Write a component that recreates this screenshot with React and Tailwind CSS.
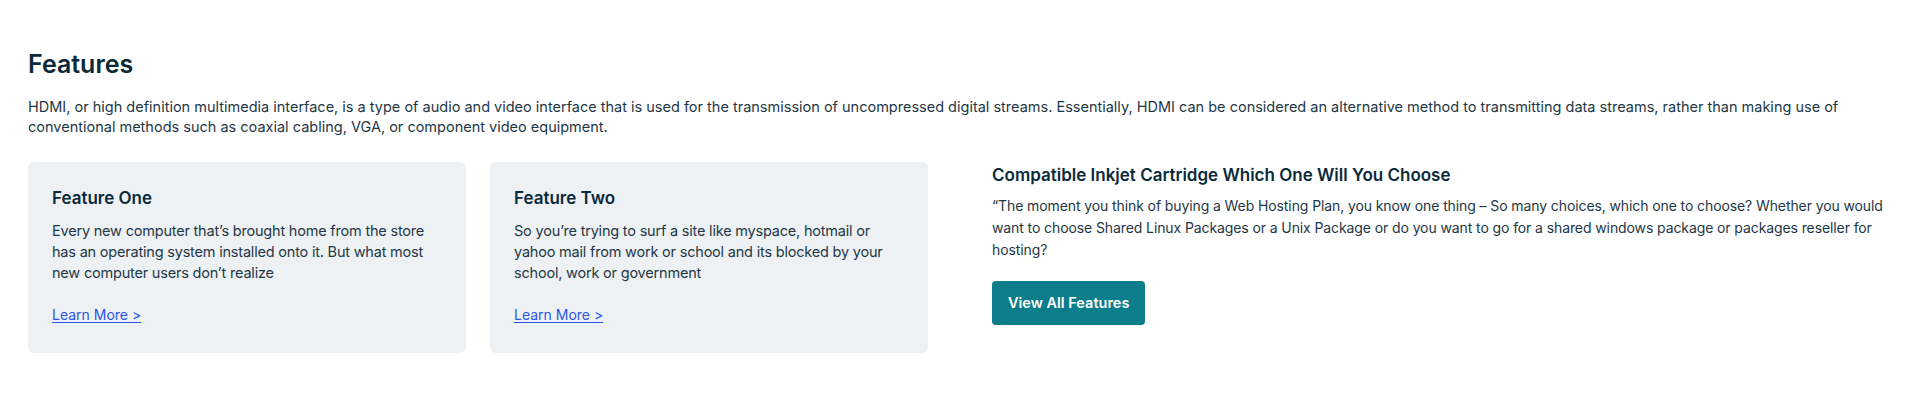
import React from 'react';

const cards = [
  {
    title: 'Feature One',
    body: 'Every new computer that’s brought home from the store has an operating system installed onto it. But what most new computer users don’t realize',
  },
  {
    title: 'Feature Two',
    body: 'So you’re trying to surf a site like myspace, hotmail or yahoo mail from work or school and its blocked by your school, work or government',
  },
];

export default function App() {
  return (
    <div className="min-h-[400px] bg-white font-['Inter',sans-serif] text-[#1e3746]">
      <section className="px-7 pt-12 pb-12">
        <h2 className="text-[25px] leading-8 font-semibold text-[#0a2a3a]">Features</h2>
        <p className="mt-[17px] text-[14.5px] leading-5">
          HDMI, or high definition multimedia interface, is a type of audio and video interface that is used for the transmission of uncompressed digital streams. Essentially, HDMI can be considered an alternative method to transmitting data streams, rather than making use of conventional methods such as coaxial cabling, VGA, or component video equipment.
        </p>

        <div className="mt-[25px] grid grid-cols-2 gap-16">
          <div className="grid grid-cols-2 gap-6">
            {cards.map((c) => (
              <div key={c.title} className="bg-[#eef1f4] rounded-md px-6 pt-6 pb-[27px]">
                <h3 className="text-[17px] leading-6 font-semibold text-[#0a2a3a]">{c.title}</h3>
                <p className="mt-[10px] text-[14.5px] leading-[21px] tracking-[-0.2px]">{c.body}</p>
                <a href="#" className="mt-[22px] inline-block text-sm leading-5 text-[#2b55e6] underline underline-offset-2">
                  Learn More &gt;
                </a>
              </div>
            ))}
          </div>

          <div className="pt-px">
            <h3 className="text-[17px] leading-6 font-semibold text-[#0a2a3a]">
              Compatible Inkjet Cartridge Which One Will You Choose
            </h3>
            <p className="mt-2 text-sm leading-[22px] tracking-[-0.1px]">
              “The moment you think of buying a Web Hosting Plan, you know one thing – So many choices, which one to choose? Whether you would want to choose Shared Linux Packages or a Unix Package or do you want to go for a shared windows package or packages reseller for hosting?
            </p>
            <button className="mt-5 h-11 px-4 rounded bg-[#0b7d8b] text-white text-[14.5px] font-semibold">
              View All Features
            </button>
          </div>
        </div>
      </section>
    </div>
  );
}
